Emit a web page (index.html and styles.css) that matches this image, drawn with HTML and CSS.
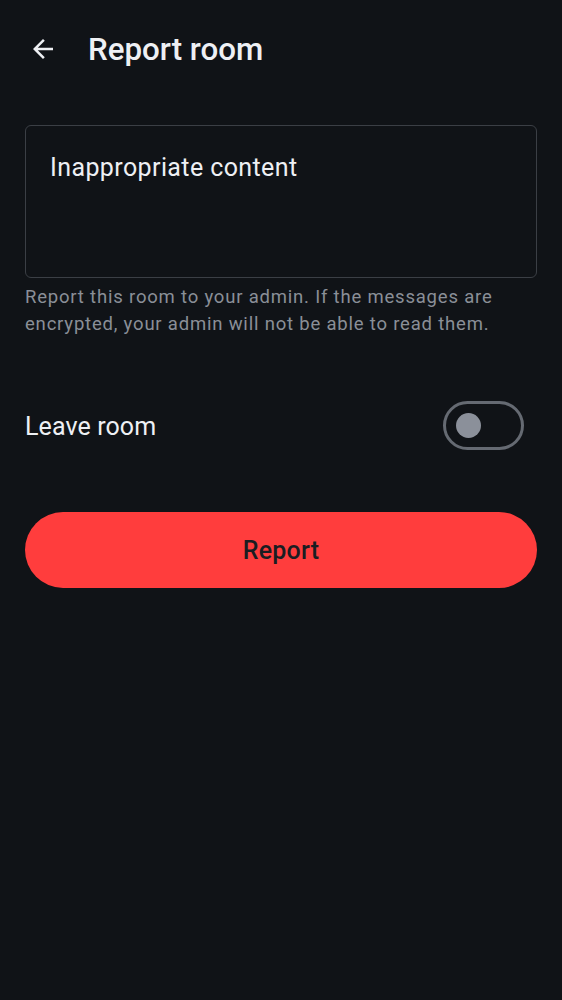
FILE: index.html
```html
<!DOCTYPE html>
<html>
<head>
<meta charset="utf-8">
<link rel="stylesheet" href="styles.css">
</head>
<body>
<div class="screen">
  <header class="topbar">
    <span class="back">
      <svg width="30" height="30" viewBox="0 0 24 24"><path d="M20 11H7.83l5.59-5.59L12 4l-8 8 8 8 1.41-1.41L7.83 13H20v-2z" fill="#eef0f4"/></svg>
    </span>
    <h1 class="title">Report room</h1>
  </header>
  <main class="content">
    <div class="field">
      <div class="input">Inappropriate content</div>
      <p class="helper">Report this room to your admin. If the messages are encrypted, your admin will not be able to read them.</p>
    </div>
    <div class="row">
      <span class="row-label">Leave room</span>
      <span class="toggle"><span class="thumb"></span></span>
    </div>
    <button class="report">Report</button>
  </main>
</div>
</body>
</html>
```

FILE: styles.css
```css
html, body {
  margin: 0;
  padding: 0;
  background: #101317;
}
body {
  font-family: Roboto, "Noto Sans", sans-serif;
  color: #eef0f4;
  width: 562px;
  height: 1000px;
}
.screen {
  display: flex;
  flex-direction: column;
}
.topbar {
  display: flex;
  align-items: center;
  height: 98px;
  padding-left: 28px;
}
.back {
  display: flex;
  width: 30px;
  height: 30px;
}
.title {
  margin: 0 0 0 30px;
  font-size: 31.3px;
  font-weight: 500;
  letter-spacing: 0;
  color: #eef0f4;
}
.content {
  display: flex;
  flex-direction: column;
  padding: 27px 25px 0 25px;
}
.input {
  box-sizing: border-box;
  height: 153px;
  border: 1.5px solid #3b3f45;
  border-radius: 6px;
  padding: 26px 24px;
  font-size: 25px;
  line-height: 32px;
  color: #eef0f4;
  letter-spacing: 0.4px;
}
.helper {
  margin: 6px 0 0 0;
  font-size: 18.5px;
  line-height: 27px;
  color: #8a8f97;
  letter-spacing: 0.8px;
}
.row {
  display: flex;
  align-items: center;
  justify-content: space-between;
  margin-top: 62px;
  height: 50px;
  padding-right: 13px;
}
.row-label {
  font-size: 25px;
  color: #eef0f4;
  letter-spacing: 0.1px;
  padding-top: 2px;
}
.toggle {
  box-sizing: border-box;
  width: 81px;
  height: 49px;
  border: 3px solid #656a72;
  border-radius: 25px;
  display: flex;
  align-items: center;
  padding-left: 10px;
}
.thumb {
  width: 25px;
  height: 25px;
  border-radius: 50%;
  background: #8b909a;
}
.report {
  margin-top: 62px;
  height: 76px;
  border: none;
  border-radius: 38px;
  background: #ff3d3d;
  color: #1b1d22;
  font-family: Roboto, "Noto Sans", sans-serif;
  font-size: 25px;
  font-weight: 500;
  letter-spacing: 0.2px;
}
```
